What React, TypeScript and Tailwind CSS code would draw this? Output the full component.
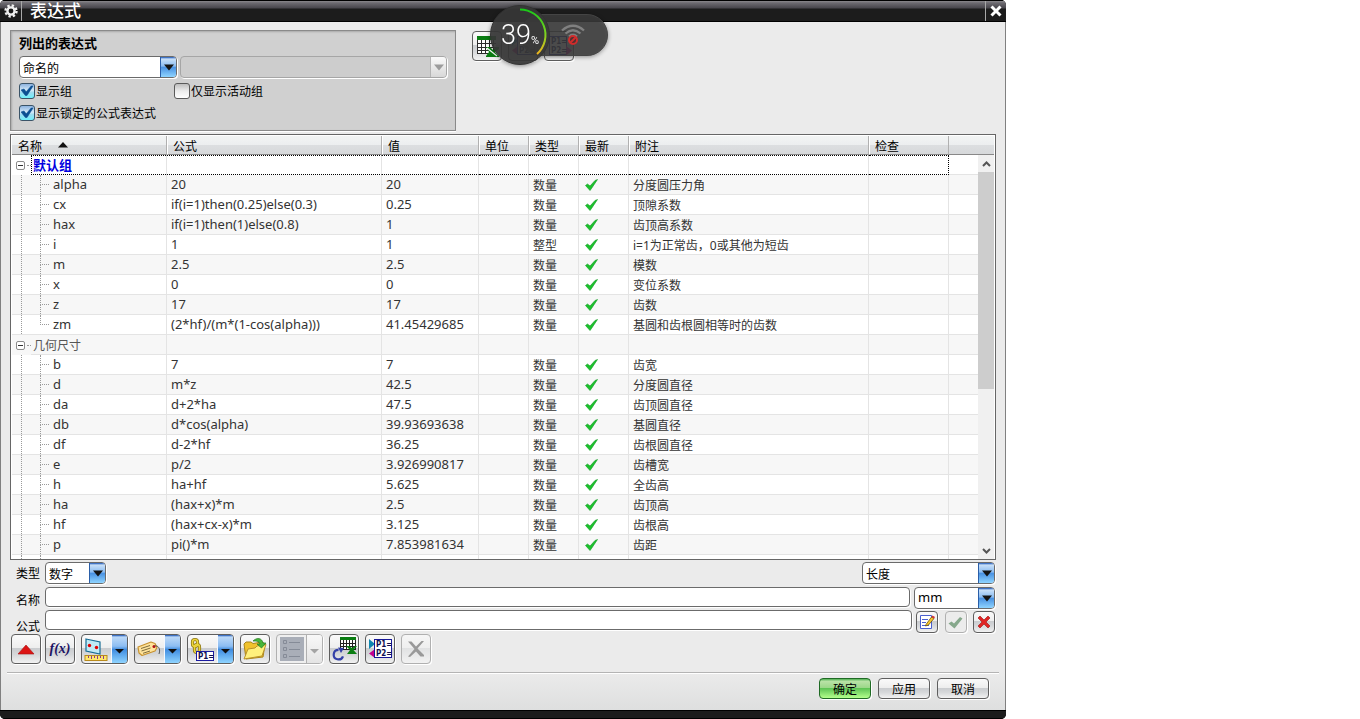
import { useState } from "react";
import type { ReactNode } from "react";

type Row = {
  name: string;
  formula?: string;
  value?: string;
  kind?: string;
  note?: string;
  group?: boolean;
  focused?: boolean;
  last?: boolean;
};

const rows: Row[] = [
  { name: "默认组", group: true, focused: true },
  { name: "alpha", formula: "20", value: "20", kind: "数量", note: "分度圆压力角" },
  { name: "cx", formula: "if(i=1)then(0.25)else(0.3)", value: "0.25", kind: "数量", note: "顶隙系数" },
  { name: "hax", formula: "if(i=1)then(1)else(0.8)", value: "1", kind: "数量", note: "齿顶高系数" },
  { name: "i", formula: "1", value: "1", kind: "整型", note: "i=1为正常齿，0或其他为短齿" },
  { name: "m", formula: "2.5", value: "2.5", kind: "数量", note: "模数" },
  { name: "x", formula: "0", value: "0", kind: "数量", note: "变位系数" },
  { name: "z", formula: "17", value: "17", kind: "数量", note: "齿数" },
  { name: "zm", formula: "(2*hf)/(m*(1-cos(alpha)))", value: "41.45429685", kind: "数量", note: "基圆和齿根圆相等时的齿数", last: true },
  { name: "几何尺寸", group: true },
  { name: "b", formula: "7", value: "7", kind: "数量", note: "齿宽" },
  { name: "d", formula: "m*z", value: "42.5", kind: "数量", note: "分度圆直径" },
  { name: "da", formula: "d+2*ha", value: "47.5", kind: "数量", note: "齿顶圆直径" },
  { name: "db", formula: "d*cos(alpha)", value: "39.93693638", kind: "数量", note: "基圆直径" },
  { name: "df", formula: "d-2*hf", value: "36.25", kind: "数量", note: "齿根圆直径" },
  { name: "e", formula: "p/2", value: "3.926990817", kind: "数量", note: "齿槽宽" },
  { name: "h", formula: "ha+hf", value: "5.625", kind: "数量", note: "全齿高" },
  { name: "ha", formula: "(hax+x)*m", value: "2.5", kind: "数量", note: "齿顶高" },
  { name: "hf", formula: "(hax+cx-x)*m", value: "3.125", kind: "数量", note: "齿根高" },
  { name: "p", formula: "pi()*m", value: "7.853981634", kind: "数量", note: "齿距" },
];

const headers = ["公式", "值", "单位", "类型", "最新", "附注", "检查"];

const frame = "border border-[#6b6b6b] rounded-[4px] shadow-[1px_1px_0_#ffffff]";
const face =
  "bg-[linear-gradient(180deg,#fafafa_0%,#eeeeee_45%,#c9cbce_46%,#d6d8da_70%,#f2f2f2_100%)]";

function Arrow({ disabled }: { disabled?: boolean }) {
  return (
    <span
      className={
        "pointer-events-none absolute inset-y-px right-px flex w-4 items-center justify-center rounded-r-[3px] border-l " +
        (disabled
          ? "border-[#b4b4b4] bg-[linear-gradient(180deg,#fafafa,#d8d8d8)]"
          : "border-[#2a5ea8] bg-[linear-gradient(180deg,#1450b4_0%,#c9e0f8_10%,#8cbdf2_45%,#4a92e2_52%,#8fd4ff_100%)]")
      }
    >
      <svg width="12" height="7" viewBox="0 0 12 7">
        <path d="M1 0.5h10L6 6.5z" fill={disabled ? "#9c9c9c" : "#141414"} />
      </svg>
    </span>
  );
}

function Combo({ label, value, width, disabled }: { label: string; value: string; width: string; disabled?: boolean }) {
  return (
    <span className={"relative flex h-[22px] " + width}>
      <select
        aria-label={label}
        disabled={disabled}
        defaultValue={value}
        className={
          "w-full appearance-none pt-[3px] pr-5 pl-[3px] text-xs text-black outline-none " +
          (disabled
            ? "rounded-[4px] border border-[#a6a6a6] bg-[#cdcdcd] shadow-[1px_1px_0_#ffffff]"
            : "bg-white " + frame)
        }
      >
        <option>{value}</option>
      </select>
      <Arrow disabled={disabled} />
    </span>
  );
}

function Check({ label, checked }: { label: string; checked?: boolean }) {
  const [on, setOn] = useState(!!checked);
  return (
    <label className="flex h-[22px] items-center gap-px text-xs">
      <span className="relative flex size-4">
        <input
          type="checkbox"
          checked={on}
          onChange={() => setOn(!on)}
          className="size-4 appearance-none rounded-[3px] border border-[#5a5a5a] bg-[linear-gradient(180deg,#bdbdbd,#ececec_50%,#ffffff)] checked:border-[#3b5468] checked:bg-[linear-gradient(180deg,#8fb4e0,#d4eaf8_45%,#9fdcf0_60%,#6ff0fa)]"
        />
        {on && (
          <svg className="pointer-events-none absolute inset-0" width="16" height="16" viewBox="0 0 16 16">
            <path d="M2 7l3-1 2.2 2.8L12.2 3H14L8 12.500H6.400z" fill="#0b4f92" stroke="#0b4f92" strokeWidth="0.600" />
          </svg>
        )}
      </span>
      <span className="pt-[2px]">{label}</span>
    </label>
  );
}

function ToolButton({ label, children, disabled }: { label: string; children: ReactNode; disabled?: boolean }) {
  return (
    <button
      type="button"
      aria-label={label}
      disabled={disabled}
      className={
        "flex size-[30px] shrink-0 items-center justify-center rounded-[4px] border shadow-[1px_1px_0_#ffffff] " +
        (disabled
          ? "border-[#b0b0b0] bg-[linear-gradient(180deg,#f6f6f6_0%,#efefef_45%,#e0e1e2_46%,#f2f2f2_100%)]"
          : "border-[#5e5e5e] " + face)
      }
    >
      {children}
    </button>
  );
}

function SplitButton({ label, children, disabled }: { label: string; children: ReactNode; disabled?: boolean }) {
  return (
    <span
      className={
        "flex h-[30px] w-[47px] shrink-0 overflow-hidden rounded-[4px] border shadow-[1px_1px_0_#ffffff] " +
        (disabled ? "border-[#b0b0b0] bg-[#efefef]" : "border-[#5e5e5e] " + face)
      }
    >
      <button type="button" aria-label={label} disabled={disabled} className="flex flex-1 items-center justify-center">
        {children}
      </button>
      <button
        type="button"
        aria-label={label + "选项"}
        disabled={disabled}
        className={
          "flex w-4 items-center justify-center border-l pt-1 " +
          (disabled
            ? "border-[#b0b0b0] bg-[linear-gradient(180deg,#f8f8f8,#e4e4e4)]"
            : "border-[#f4f8ff] bg-[linear-gradient(180deg,#1450b4_0%,#bcd9f8_7%,#8cbdf2_40%,#3f8ce0_52%,#8fd4ff_100%)]")
        }
      >
        <svg width="9" height="6" viewBox="0 0 9 6">
          <path d="M0 1h9L4.500 5.500z" fill={disabled ? "#a4a4a4" : "#101010"} />
        </svg>
      </button>
    </span>
  );
}

function SheetIcon() {
  return (
    <svg width="24" height="24" viewBox="0 0 24 24" shapeRendering="crispEdges">
      <rect x="2" y="2" width="19" height="4" fill="#0a7d12" />
      <rect x="2" y="6" width="19" height="14" fill="#ffffff" />
      <path d="M2.500 6v14M2 9.500h19M2 13.500h19M2 16.500h19M2 19.500h19M6.500 6v14M10.500 6v14M14.500 6v14M18.500 6v14" stroke="#2b2b2b" fill="none" />
      <path d="M11 13h4l3 3 3-3h3v2l-4 3 4 4v1H11v-1l3-4z" fill="#0a7d12" shapeRendering="auto" />
      <path d="M12 14l10 8" stroke="#ffffff" strokeWidth="1.200" shapeRendering="auto" />
    </svg>
  );
}

function ParamIcon({ side }: { side: "in" | "out" }) {
  return (
    <svg width="26" height="24" viewBox="0 0 26 24">
      {side === "in" ? (
        <>
          <path d="M2 2l6 5-6 5z" fill="#0f86ae" />
          <path d="M8 12v9l-6-4.500z" fill="#c3008c" />
          <rect x="7.500" y="2.500" width="17" height="18" fill="#fff" stroke="#171796" />
        </>
      ) : (
        <>
          <rect x="3.500" y="2.500" width="17" height="18" fill="#fff" stroke="#171796" />
          <path d="M20 12l6 4.500-6 5z" fill="#c3008c" />
        </>
      )}
      <text x={side === "in" ? 9 : 5} y="10" fontSize="8" fontFamily="DejaVu Sans Condensed, Liberation Sans, sans-serif" fontWeight="700" fill="#10104f">P1=</text>
      <text x={side === "in" ? 9 : 5} y="19" fontSize="8" fontFamily="DejaVu Sans Condensed, Liberation Sans, sans-serif" fontWeight="700" fill="#10104f">P2=</text>
    </svg>
  );
}

function MeasureIcon() {
  return (
    <svg width="25" height="25" viewBox="0 0 25 25">
      <path d="M2 2l14 3v12L2 14z" fill="#bfeaf6" stroke="#176c94" strokeWidth="1.200" />
      <circle cx="5.500" cy="8.500" r="1.700" fill="#e00000" />
      <circle cx="12.500" cy="10.500" r="1.700" fill="#e00000" />
      <rect x="1" y="18.500" width="22" height="5" fill="#ffe86b" stroke="#b98a1c" />
      <path d="M4.500 19v2M7.500 19v3M10.500 19v2M13.500 19v3M16.500 19v2M19.500 19v3" stroke="#8c3d8c" strokeWidth="1" />
    </svg>
  );
}

function TagIcon() {
  return (
    <svg width="25" height="24" viewBox="0 0 25 24">
      <path d="M1 10l13-5 4 1.500 2 4-2 3.500-13 4.500L2 16z" fill="#ffe39a" stroke="#c79230" strokeWidth="1.200" strokeLinejoin="round" />
      <path d="M4 11.500l9-3M4.500 14l9-3M6 16.300l7-2.300" stroke="#7d6c3e" fill="none" />
      <circle cx="17" cy="9.500" r="1.500" fill="#b80c0c" />
      <path d="M17.500 9c3-1 6.500 2 4.500 8" stroke="#555" fill="none" />
    </svg>
  );
}

function ChainIcon() {
  return (
    <svg width="25" height="25" viewBox="0 0 25 25">
      <g fill="none" stroke="#8b7412" strokeWidth="3.200">
        <rect x="2.500" y="2.500" width="5" height="7" rx="2.500" />
        <rect x="4.500" y="7.500" width="5" height="8" rx="2.500" />
      </g>
      <g fill="none" stroke="#ecd53c" strokeWidth="1.600">
        <rect x="2.500" y="2.500" width="5" height="7" rx="2.500" />
        <rect x="4.500" y="7.500" width="5" height="8" rx="2.500" />
      </g>
      <rect x="6.500" y="14.500" width="17" height="9" fill="#fff" stroke="#1b1ba0" />
      <text x="8" y="22" fontSize="8" fontWeight="700" fontFamily="DejaVu Sans Condensed, Liberation Sans, sans-serif" fill="#10104f">P1=</text>
    </svg>
  );
}

function FolderIcon() {
  return (
    <svg width="26" height="26" viewBox="0 0 26 26">
      <path d="M2 8l2-2h5l2 1.500 9-1.500 3 2-2 13-17 2z" fill="#f0c22c" stroke="#a8831a" strokeLinejoin="round" />
      <path d="M2 23l4-10 7-1 2-2 9-1.500L20 20z" fill="#fff07c" stroke="#b9922a" strokeLinejoin="round" />
      <path d="M11 5c4-4 9-3 10 2h3l-4.500 5L15 8h3c-1-3-4-3-7-3z" fill="#46b63a" stroke="#237a20" strokeWidth="0.700" />
    </svg>
  );
}

function RefreshSheetIcon() {
  return (
    <svg width="26" height="26" viewBox="0 0 26 26">
      <g shapeRendering="crispEdges">
        <rect x="9" y="1" width="16" height="3" fill="#0a7d12" />
        <rect x="9" y="4" width="16" height="10" fill="#fff" />
        <path d="M9.500 4v10M12.500 4v10M15.500 4v10M18.500 4v10M21.500 4v10M24.500 4v10M9 7.500h16M9 10.500h16M9 13.500h16" stroke="#222" fill="none" />
      </g>
      <path d="M15 10h3l3 2 3-2h2l-3.500 4 3.500 4H16l3-4z" fill="#0a7d12" />
      <path d="M7.500 13.800a4.800 4.800 0 1 0 4.500 6.500" fill="none" stroke="#3340a8" strokeWidth="2.200" />
      <path d="M7 11.500l6 0.500-3 5z" fill="#3340a8" />
    </svg>
  );
}

function ListIcon() {
  return (
    <svg width="24" height="24" viewBox="0 0 24 24">
      <rect width="24" height="24" fill="#a9aeb8" />
      <g fill="none" stroke="#858b97">
        <path d="M3.500 3.500h3v3h-3zM3.500 10.500h3v3h-3zM3.500 17.500h3v3h-3z" />
        <path d="M9 5.500h11M9 12.500h11M9 19.500h11" strokeWidth="1" />
      </g>
    </svg>
  );
}

function TreeLines({ last }: { last?: boolean }) {
  return (
    <>
      <span className="ml-[9px] w-[19px] shrink-0 border-l border-dotted border-[#9a9a9a]" />
      <span className="mr-1 grid w-[9px] shrink-0 grid-rows-2">
        <span className="border-b border-l border-dotted border-[#9a9a9a]" />
        <span className={last ? "" : "border-l border-dotted border-[#9a9a9a]"} />
      </span>
    </>
  );
}

function NameCell({ row }: { row: Row }) {
  if (row.group) {
    return (
      <div className="flex h-5">
        <span className="flex w-[19px] shrink-0 items-center pl-1">
          <button
            type="button"
            aria-label={"折叠" + row.name}
            className="flex size-[9px] items-center justify-center rounded-[2px] border border-[#8c8c8c] bg-white"
          >
            <span className="h-px w-[5px] bg-[#333333]" />
          </button>
          <span className="ml-[2px] w-1 border-t border-dotted border-[#9a9a9a]" />
        </span>
        <span
          className={
            row.focused
              ? "flex flex-1 items-center border-y border-l border-dotted border-black pl-px text-[13px] font-bold text-[#0000e0]"
              : "flex flex-1 items-center border-b border-[#e4e4e4] pt-[2px] pl-[2px] text-xs text-[#555555]"
          }
        >
          {row.name}
        </span>
      </div>
    );
  }
  return (
    <div className="flex h-5 border-b border-[#e4e4e4]">
      <TreeLines last={row.last} />
      <span className="leading-[19px]">{row.name}</span>
    </div>
  );
}

function ListedPanel() {
  return (
    <fieldset className="w-[446px] border border-[#8a8a8a] bg-[#d0d0d0] px-2 pt-[3px] pb-[6px] shadow-[inset_1px_1px_2px_#a8a8a8,0_1px_0_#ffffff]">
      <h2 className="mb-[2px] h-5 text-[13px] leading-[18px] font-bold">列出的表达式</h2>
      <div className="mb-[2px] flex gap-[3px]">
        <Combo label="列出的表达式" value="命名的" width="w-[158px]" />
        <Combo label="筛选值" value="" width="flex-1" disabled />
      </div>
      <div className="grid grid-cols-[155px_1fr]">
        <Check label="显示组" checked />
        <Check label="仅显示活动组" />
        <Check label="显示锁定的公式表达式" checked />
      </div>
    </fieldset>
  );
}

function Gauge() {
  return (
    <div className="absolute top-[5px] left-[490px] flex items-center drop-shadow-[0_1px_2px_rgba(0,0,0,0.45)]">
      <div className="z-10 flex size-[60px] items-center justify-center rounded-full border border-[#333333] bg-[#383838]/90 font-[Roboto,sans-serif] text-white">
        <span className="flex items-baseline">
          <span className="text-[27px] font-light">39</span>
          <span className="text-[11px]">%</span>
        </span>
        <svg className="absolute top-0 left-0" width="60" height="60" viewBox="0 0 60 60">
          <defs>
            <linearGradient id="ring" x1="0" y1="0" x2="0" y2="1">
              <stop offset="0" stopColor="#19c819" />
              <stop offset="0.550" stopColor="#7ed321" />
              <stop offset="1" stopColor="#f0b41e" />
            </linearGradient>
          </defs>
          <path d="M30 4.500a25.500 25.500 0 0 1 17 44.500" fill="none" stroke="url(#ring)" strokeWidth="2" />
        </svg>
      </div>
      <div className="-ml-[30px] flex h-[42px] w-[88px] items-center justify-end rounded-[21px] border border-[#444444] bg-[#3c3c3c]/85 pr-[22px]">
        <svg width="24" height="24" viewBox="0 0 24 24">
          <g fill="none" stroke="#808080" strokeWidth="2.300">
            <path d="M1 7.500q11-9.500 22 0" />
            <path d="M4.500 10.500q7.500-6.500 15 0" />
            <path d="M8 13.500q4-3.500 8 0" />
          </g>
          <circle cx="12" cy="17" r="4" fill="#503030" stroke="#d02c2c" strokeWidth="2" />
          <path d="M9.300 19.700l5.400-5.400" stroke="#d02c2c" strokeWidth="2" />
        </svg>
      </div>
    </div>
  );
}

function ExpressionTable() {
  const cell = "border-r border-b border-[#e4e4e4] p-0 pl-1";
  return (
    <div className="relative h-[426px] overflow-hidden border border-[#666666] bg-white p-px">
      <table className="w-full table-fixed border-separate border-spacing-0 text-left">
        <colgroup>
          <col className="w-[155px]" />
          <col className="w-[215px]" />
          <col className="w-[97px]" />
          <col className="w-[50px]" />
          <col className="w-[50px]" />
          <col className="w-[50px]" />
          <col className="w-[240px]" />
          <col className="w-[80px]" />
          <col />
        </colgroup>
        <thead>
          <tr className="h-[19px] bg-[linear-gradient(180deg,#f2f4f4_0%,#eceeef_48%,#dcdee0_50%,#d6d8da_100%)] text-xs leading-[15px]">
            <th className="border-r border-b border-r-[#b0b0b0] border-b-[#888888] p-0 pt-[3px] pl-[6px] font-normal">
              <span className="flex items-center gap-4">
                名称
                <svg className="mb-1" width="10" height="6" viewBox="0 0 10 6">
                  <path d="M5 0l5 5.500H0z" fill="#111111" />
                </svg>
              </span>
            </th>
            {headers.map((h) => (
              <th key={h} className="border-r border-b border-l border-r-[#b0b0b0] border-b-[#888888] border-l-white p-0 pt-[3px] pl-[5px] font-normal">
                {h}
              </th>
            ))}
            <th aria-label="空列" className="border-b border-b-[#888888] p-0" />
          </tr>
        </thead>
        <tbody>
          {rows.map((r, i) => {
            const c = r.focused ? "border-r border-y border-r-[#e4e4e4] border-y-black [border-block-style:dotted] p-0 pl-1" : cell;
            const cjk = r.group ? "" : " pt-[3px] align-top text-xs leading-[15px]";
            return (
              <tr
                key={r.name}
                className={
                  "h-5 text-[13px] leading-[18px] text-[#333333] " + (i % 2 ? "bg-[#f7f7f7]" : "bg-white")
                }
              >
                <td className="border-r border-[#e4e4e4] p-0">
                  <NameCell row={r} />
                </td>
                <td className={c + " align-top"}>{r.formula}</td>
                <td className={c + " align-top"}>{r.value}</td>
                <td className={c} />
                <td className={c + cjk}>{r.kind}</td>
                <td className={c}>
                  {!r.group && (
                    <svg className="ml-[2px]" width="13" height="12" viewBox="0 0 13 12" role="img" aria-label="最新">
                      <path d="M0.500 6.500l2-1.500L5 7l5-5.500 2.500-1-6 9L5 11.500z" fill="#1ac22c" stroke="#129a22" strokeWidth="0.600" />
                    </svg>
                  )}
                </td>
                <td className={c + cjk + " whitespace-nowrap"}>{r.note}</td>
                <td className={r.focused ? "border-y border-r border-dotted border-black" : cell} />
                <td className="border-b border-[#e4e4e4]" />
              </tr>
            );
          })}
          <tr className="h-5 bg-white">
            <td className="border-r border-[#e4e4e4] p-0">
              <div className="flex h-5">
                <TreeLines />
              </div>
            </td>
            {headers.map((h) => (
              <td key={h} className={cell} />
            ))}
            <td />
          </tr>
        </tbody>
      </table>
      <div className="absolute top-5 right-px bottom-0 flex w-4 flex-col bg-[#f0f0f0]">
        <button type="button" aria-label="向上滚动" className="flex h-[17px] items-center justify-center">
          <svg width="9" height="6" viewBox="0 0 9 6">
            <path d="M1 5l3.500-3.500L8 5" fill="none" stroke="#555555" strokeWidth="2" />
          </svg>
        </button>
        <span className="h-[217px] bg-[#cdcdcd]" />
        <span className="flex-1" />
        <button type="button" aria-label="向下滚动" className="flex h-[17px] items-center justify-center">
          <svg width="9" height="6" viewBox="0 0 9 6">
            <path d="M1 1l3.500 3.500L8 1" fill="none" stroke="#555555" strokeWidth="2" />
          </svg>
        </button>
      </div>
    </div>
  );
}

function SmallButton({ label, children, disabled }: { label: string; children: ReactNode; disabled?: boolean }) {
  return (
    <button
      type="button"
      aria-label={label}
      disabled={disabled}
      className={
        "flex size-[22px] items-center justify-center rounded-[4px] border shadow-[1px_1px_0_#ffffff] " +
        (disabled ? "border-[#b0b0b0] bg-[#ececec]" : "border-[#5e5e5e] " + face)
      }
    >
      {children}
    </button>
  );
}

function EditArea() {
  return (
    <form className="flex flex-col pt-[2px] pr-px text-xs">
      <div className="mb-[3px] flex items-center">
        <span className="w-[35px] pt-[2px] pl-[6px]">类型</span>
        <Combo label="类型" value="数字" width="w-[61px]" />
        <span className="flex-1" />
        <Combo label="量纲" value="长度" width="w-[133px]" />
      </div>
      <div className="mb-px flex items-start">
        <label htmlFor="expr-name" className="w-[35px] pt-[6px] pl-[6px] leading-4">名称</label>
        <input id="expr-name" className={"mr-1 h-5 min-w-0 flex-1 bg-white px-1 outline-none " + frame} />
        <Combo label="单位" value="mm" width="w-[81px] [&>select]:pt-0 [&>select]:text-[13px]" />
      </div>
      <div className="flex items-start">
        <label htmlFor="expr-formula" className="w-[35px] pt-[10px] pl-[6px] leading-[14px]">公式</label>
        <input id="expr-formula" className={"mr-1 h-5 min-w-0 flex-1 bg-white px-1 outline-none " + frame} />
        <div className="flex w-[79px] justify-between pt-px">
          <SmallButton label="编辑公式">
            <svg width="16" height="16" viewBox="0 0 16 16">
              <path d="M1.500 1.500h11v13h-11z" fill="#fff" stroke="#4a5fd0" />
              <path d="M3 5.500h6M3 8.500h4M3 11.500h7" stroke="#4a5fd0" />
              <path d="M7 10.500L12.500 3l2.500 1.500L9.500 11l-3 1z" fill="#f6c62c" stroke="#5e4300" strokeWidth="0.700" />
              <path d="M12.500 3l1-1.500L16 3l-1 1.500z" fill="#d83030" />
            </svg>
          </SmallButton>
          <SmallButton label="接受" disabled>
            <svg width="15" height="13" viewBox="0 0 15 13">
              <path d="M0.500 7.500l3-2L6 7.500l6-6.500L14.500 2.500 6.500 12.500z" fill="#86a88c" />
            </svg>
          </SmallButton>
          <SmallButton label="拒绝">
            <svg width="14" height="14" viewBox="0 0 14 14">
              <path d="M1 3l2-2 4 4 4-4 2 2-4 4 4 4-2 2-4-4-4 4-2-2 4-4z" fill="#e02424" stroke="#a01010" strokeWidth="0.600" />
            </svg>
          </SmallButton>
        </div>
      </div>
      <div className="flex gap-[6px] pl-px">
        <div className="flex gap-1">
          <ToolButton label="收起">
            <svg width="18" height="11" viewBox="0 0 18 11">
              <path d="M9 1l8 9H1z" fill="#dc1414" stroke="#a51010" strokeWidth="0.600" />
            </svg>
          </ToolButton>
          <ToolButton label="函数">
            <span className="font-['Liberation_Serif',serif] text-sm font-bold text-[#1c1464] italic">f(x)</span>
          </ToolButton>
        </div>
        <SplitButton label="测量">
          <MeasureIcon />
        </SplitButton>
        <SplitButton label="属性">
          <TagIcon />
        </SplitButton>
        <SplitButton label="链接表达式">
          <ChainIcon />
        </SplitButton>
        <ToolButton label="打开">
          <FolderIcon />
        </ToolButton>
        <SplitButton label="列表" disabled>
          <ListIcon />
        </SplitButton>
        <ToolButton label="刷新电子表格">
          <RefreshSheetIcon />
        </ToolButton>
        <ToolButton label="引用表达式">
          <ParamIcon side="in" />
        </ToolButton>
        <ToolButton label="删除" disabled>
          <svg width="18" height="18" viewBox="0 0 18 18">
            <path d="M1 1.500h3.500L9 6.500 14.500 1H17l-6.500 7.500L17 15v1.500h-3.500L9 11.500 3 17l-2-0.500L7.500 9z" fill="#999999" />
          </svg>
        </ToolButton>
      </div>
    </form>
  );
}

export default function App() {
  const action = "h-[21px] w-[52px] rounded-[4px] border pt-[2px] text-xs leading-[17px] shadow-[1px_1px_0_#ffffff] ";
  return (
    <div className="min-h-screen bg-white font-['Noto_Sans','Noto_Sans_CJK_SC',sans-serif] text-black">
      <main className="relative w-full max-w-[1006px] overflow-hidden rounded-[5px] bg-black">
        <header className="flex h-[22px] items-stretch border-y border-black bg-[linear-gradient(180deg,#8a888c_0px,#6c6a70_2px,#48464c_7px,#1c1c1c_8px,#1c1c1c_20px)] text-white">
          <button type="button" aria-label="对话框选项" className="flex w-[22px] items-center justify-center border-r border-[#a8a8a8]">
            <svg width="14" height="14" viewBox="0 0 14 14">
              <circle cx="7" cy="7" r="5.500" fill="none" stroke="#f0f0f0" strokeWidth="2.400" strokeDasharray="2.300 2.020" />
              <circle cx="7" cy="7" r="3.600" fill="none" stroke="#f0f0f0" strokeWidth="2.400" />
            </svg>
          </button>
          <h1 className="flex-1 pl-2 text-[17px] leading-[19px] font-medium">表达式</h1>
          <button type="button" aria-label="关闭" className="flex w-[21px] items-center justify-center border-l border-[#a8a8a8]">
            <svg width="12" height="12" viewBox="0 0 12 12">
              <path d="M1.500 1.500l9 9M10.500 1.500l-9 9" stroke="#ffffff" strokeWidth="3" />
            </svg>
          </button>
        </header>
        <div className="border-x border-[#808080] bg-[#ebebeb]">
          <div className="px-[9px] pt-2">
            <section className="mb-[3px] flex items-start gap-4">
              <ListedPanel />
              <div className="flex gap-[6px] pt-px">
                <ToolButton label="电子表格编辑">
                  <SheetIcon />
                </ToolButton>
                <ToolButton label="导入表达式">
                  <ParamIcon side="in" />
                </ToolButton>
                <ToolButton label="导出表达式">
                  <ParamIcon side="out" />
                </ToolButton>
              </div>
            </section>
            <ExpressionTable />
            <EditArea />
          </div>
          <footer className="mt-2 bg-[linear-gradient(180deg,#ebebeb,#dedfdf)] px-[6px]">
            <div className="flex justify-end gap-[7px] border-t border-[#b4b4b4] pt-[5px] pr-[10px] pb-[11px] shadow-[inset_0_1px_0_#ffffff]">
              <button type="button" className={action + "border-[#1f6a24] bg-[linear-gradient(180deg,#4fb052_0%,#b9e2a6_12%,#9dd88a_45%,#5fc455_50%,#b4ff8c_100%)]"}>
                确定
              </button>
              <button type="button" className={action + "border-[#5e5e5e] " + face}>应用</button>
              <button type="button" className={action + "border-[#5e5e5e] " + face}>取消</button>
            </div>
          </footer>
        </div>
        <div className="h-[9px] border-y border-black bg-[#1c1c1c]" />
        <Gauge />
      </main>
    </div>
  );
}
